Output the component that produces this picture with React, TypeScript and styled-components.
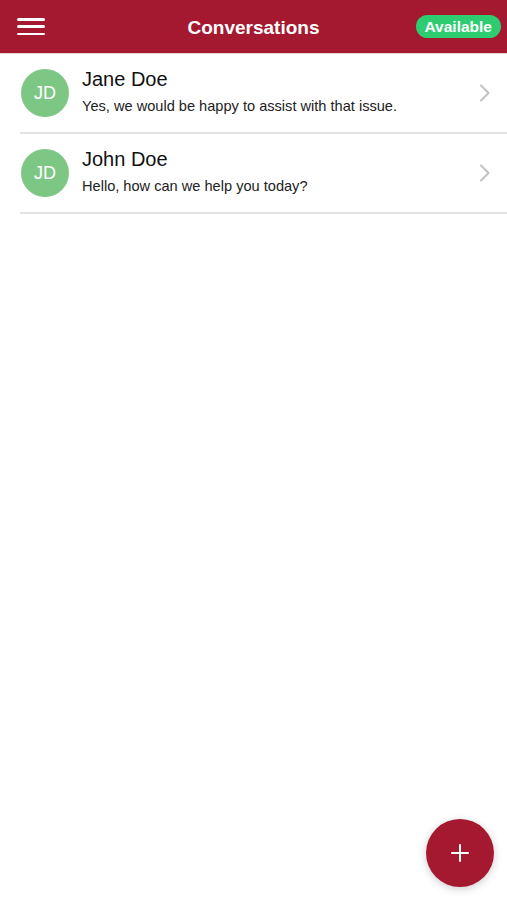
import React from "react";
import styled, { createGlobalStyle } from "styled-components";

const Global = createGlobalStyle`
  html, body { margin: 0; padding: 0; background: #fff; }
  body { font-family: "Liberation Sans", Arial, sans-serif; }
  * { box-sizing: border-box; }
`;

const Page = styled.div`
  width: 507px;
  height: 900px;
  display: flex;
  flex-direction: column;
  position: relative;
  background: #fff;
  overflow: hidden;
`;

const Header = styled.header`
  height: 54px;
  flex-shrink: 0;
  background: #a51930;
  display: grid;
  grid-template-columns: 1fr auto 1fr;
  align-items: center;
  padding: 2px 6px 0 6px;
  border-bottom: 1px solid #e6d3d5;
`;

const MenuButton = styled.button`
  justify-self: start;
  margin-left: 11px;
  margin-top: -2px;
  width: 28px;
  height: 17px;
  padding: 0;
  border: 0;
  background: transparent;
  display: flex;
  flex-direction: column;
  justify-content: space-between;
  cursor: pointer;
`;

const MenuLine = styled.span`
  display: block;
  height: 2.5px;
  border-radius: 2px;
  background: #fff;
`;

const Title = styled.h1`
  margin: 0;
  color: #fff;
  font-size: 19px;
  font-weight: 700;
`;

const StatusPill = styled.span`
  justify-self: end;
  margin-top: -2px;
  height: 23px;
  padding: 0 9px;
  border-radius: 12px;
  background: #2ecc71;
  color: #fff;
  font-weight: 700;
  font-size: 15.5px;
  display: flex;
  align-items: center;
`;

const List = styled.ul`
  list-style: none;
  margin: 0;
  padding: 0 0 0 20px;
`;

const Row = styled.li`
  height: 80px;
  display: flex;
  align-items: center;
  border-bottom: 2px solid #e3e3e3;
  padding-right: 16px;
`;

const Avatar = styled.div`
  width: 48px;
  height: 48px;
  border-radius: 50%;
  background: #7dc785;
  color: #fff;
  font-size: 18px;
  display: flex;
  align-items: center;
  justify-content: center;
  flex-shrink: 0;
  margin-left: 1px;
`;

const Body = styled.div`
  flex: 1;
  margin-left: 13px;
  margin-top: -4px;
  display: flex;
  flex-direction: column;
  gap: 6px;
`;

const Name = styled.div`
  font-size: 20px;
  line-height: 23px;
  color: #111;
`;

const Message = styled.div`
  font-size: 14.6px;
  line-height: 18px;
  color: #222;
`;

const Fab = styled.button`
  position: absolute;
  right: 13px;
  bottom: 13px;
  width: 68px;
  height: 68px;
  border-radius: 50%;
  border: 0;
  background: #a51930;
  box-shadow: 0 2px 8px rgba(0, 0, 0, 0.2);
  display: flex;
  align-items: center;
  justify-content: center;
  cursor: pointer;
`;

const Chevron = () => (
  <svg width="12" height="18" viewBox="0 0 12 18" fill="none">
    <path d="M2 1.5 L9.5 9 L2 16.5" stroke="#c2c2c2" strokeWidth="2" strokeLinecap="round" strokeLinejoin="round" />
  </svg>
);

const conversations = [
  { initials: "JD", name: "Jane Doe", message: "Yes, we would be happy to assist with that issue." },
  { initials: "JD", name: "John Doe", message: "Hello, how can we help you today?" },
];

export default function App() {
  return (
    <Page>
      <Global />
      <Header>
        <MenuButton aria-label="Menu">
          <MenuLine />
          <MenuLine />
          <MenuLine />
        </MenuButton>
        <Title>Conversations</Title>
        <StatusPill>Available</StatusPill>
      </Header>
      <List>
        {conversations.map((c) => (
          <Row key={c.name}>
            <Avatar>{c.initials}</Avatar>
            <Body>
              <Name>{c.name}</Name>
              <Message>{c.message}</Message>
            </Body>
            <Chevron />
          </Row>
        ))}
      </List>
      <Fab aria-label="New conversation">
        <svg width="20" height="20" viewBox="0 0 20 20">
          <path d="M10 2 V18 M2 10 H18" stroke="#fff" strokeWidth="2" strokeLinecap="round" />
        </svg>
      </Fab>
    </Page>
  );
}
